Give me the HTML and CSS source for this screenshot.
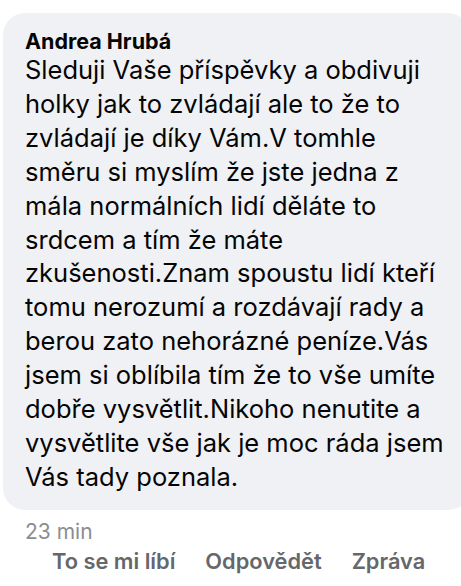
FILE: index.html
```html
<!DOCTYPE html>
<html lang="cs">
<head>
    <meta charset="UTF-8">
    <title>Komentář</title>
    <link rel="stylesheet" href="styles.css">
</head>
<body>
    <div class="comment">
        <div class="bubble">
            <div class="author">Andrea Hrubá</div>
            <p class="text">Sleduji Vaše příspěvky a obdivuji holky jak to zvládají ale to že to zvládají je díky Vám.V tomhle směru si myslím že jste jedna z mála normálních lidí děláte to srdcem a tím že máte zkušenosti.Znam spoustu lidí kteří tomu nerozumí a rozdávají rady a berou zato nehorázné peníze.Vás jsem si oblíbila tím že to vše umíte dobře vysvětlit.Nikoho nenutite a vysvětlite vše jak je moc ráda jsem Vás tady poznala.</p>
        </div>
        <div class="time">23 min</div>
        <div class="actions">
            <span>To se mi líbí</span>
            <span>Odpovědět</span>
            <span>Zpráva</span>
        </div>
    </div>
    <div class="divider"></div>
</body>
</html>
```
FILE: styles.css
```css
/* Kommentar-Ansicht */

body {
    margin: 0;
    background-color: #fff;
    font-family: Inter, "Noto Sans", sans-serif;
    color: #050505;
    overflow: hidden;
}

.comment {
    padding: 13px 0 0 3px;
}

.bubble {
    width: 445px;
    padding: 16px 0 16px 22px;
    background-color: #f0f1f5;
    border-radius: 22px;
}

.author {
    font-size: 21.5px;
    font-weight: 700;
    line-height: 24px;
}

.text {
    margin: 0;
    width: 425px;
    font-size: 25.5px;
    line-height: 33.9px;
}

.time {
    margin: 9px 0 0 22px;
    font-size: 21px;
    line-height: 26px;
    color: #8a8d91;
}

.actions {
    display: flex;
    gap: 30px;
    margin: 2px 0 0 49px;
    font-size: 21.8px;
    font-weight: 600;
    line-height: 28px;
    color: #65676b;
}

.divider {
    margin-top: 14px;
    height: 6px;
    background-color: #f0f2f5;
}
```
